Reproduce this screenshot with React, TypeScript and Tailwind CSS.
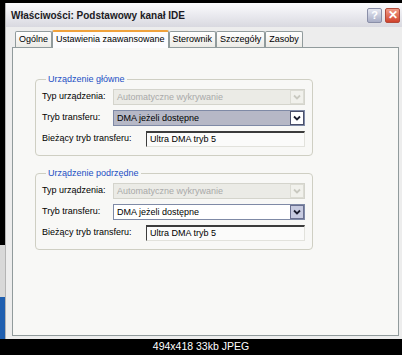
import React from 'react';

const font = { fontFamily: '"Liberation Sans", Arial, sans-serif' };

function Chevron({ color }: { color: string }) {
    return (
        <svg width="8" height="6" viewBox="0 0 8 6">
            <path d="M1 1.5 L4 4.5 L7 1.5" fill="none" stroke={color} strokeWidth="1.8" />
        </svg>
    );
}

function Combo({ value, kind }: { value: string; kind: 'disabled' | 'focused' | 'normal' }) {
    const box =
        kind === 'disabled'
            ? 'bg-[#ebebe6] border-[#d4d4cc] text-[#a9a9a9]'
            : kind === 'focused'
              ? 'bg-[#b6b8c6] border-[#7f8aa6] text-black'
              : 'bg-white border-[#7f8aa6] text-black';
    const btn =
        kind === 'disabled'
            ? 'bg-[#f1f1ec] border-[#dcdcd4]'
            : kind === 'focused'
              ? 'bg-white border-[#4a4f6a]'
              : 'bg-[#c7cbe0] border-[#6a7090]';
    return (
        <div className={`flex items-center h-[16px] w-[192px] border ${box}`}>
            <span className="flex-1 pl-[3px] text-[9px] leading-none truncate">{value}</span>
            <div className={`w-[14px] h-[14px] border flex items-center justify-center ${btn}`}>
                <Chevron color={kind === 'disabled' ? '#c9c9c0' : '#1b1d2e'} />
            </div>
        </div>
    );
}

function Group({ title, focused }: { title: string; focused: boolean }) {
    return (
        <fieldset className="w-[278px] border border-[#cfcfc3] rounded-[4px] pl-[6px] pr-[7px] pb-[8px]">
            <legend className="ml-[4px] px-[2px] text-[9px] text-[#1d4fc4] leading-[10px]">{title}</legend>
            <div className="flex flex-col gap-[5px] pt-[5px] text-[9px] text-black">
                <div className="flex items-center justify-between">
                    <span>Typ urządzenia:</span>
                    <Combo value="Automatyczne wykrywanie" kind="disabled" />
                </div>
                <div className="flex items-center justify-between">
                    <span>Tryb transferu:</span>
                    <Combo value="DMA jeżeli dostępne" kind={focused ? 'focused' : 'normal'} />
                </div>
                <div className="flex items-center justify-between">
                    <span>Bieżący tryb transferu:</span>
                    <div className="w-[159px] h-[16px] flex items-center pl-[3px] bg-[#fbfbfa] border-t-2 border-l border-t-[#3c3c3c] border-l-[#3c3c3c] border-r border-b border-r-[#e2e2dc] border-b-[#e2e2dc]">
                        Ultra DMA tryb 5
                    </div>
                </div>
            </div>
        </fieldset>
    );
}

const tabs = ['Ogólne', 'Ustawienia zaawansowane', 'Sterownik', 'Szczegóły', 'Zasoby'];

export default function App() {
    return (
        <div className="w-[402px] h-[355px] bg-black flex flex-col overflow-hidden" style={font}>
            <div className="flex h-[343px]">
                {/* strip of the desktop behind the window */}
                <div className="w-[5px] flex flex-col">
                    <div className="h-[245px] bg-black" />
                    <div className="h-[52px] bg-[#d8d8d8]" />
                    <div className="flex-1 bg-[#1f5fb0]" />
                </div>

                {/* Window */}
                <div className="flex-1 mt-[3px] flex flex-col bg-[#ededed] border-l border-[#b4b4b4]">
                    {/* Title bar */}
                    <div className="h-[24px] flex items-center pl-[5px] pr-[2px] bg-gradient-to-b from-[#fbfbfd] via-[#eaeaef] to-[#d9d9e0]">
                        <span className="flex-1 text-[10px] font-bold text-[#1b1b24]">
                            Właściwości: Podstawowy kanał IDE
                        </span>
                        <div className="w-[15px] h-[15px] mr-[3px] rounded-[2px] border border-[#8a8fa8] bg-gradient-to-b from-[#e6e8f2] to-[#a9aec6] flex items-center justify-center text-[11px] font-bold text-white leading-none">
                            ?
                        </div>
                        <div className="w-[15px] h-[15px] rounded-[2px] border border-[#b24a3a] bg-gradient-to-b from-[#f09a86] to-[#d0402a] flex items-center justify-center text-[12px] font-bold text-white leading-none">
                            ✕
                        </div>
                    </div>

                    {/* Body */}
                    <div className="flex-1 flex flex-col pl-[6px] pr-[3px] pt-[3px] pb-[3px]">
                        <div className="flex items-end pl-[3px] h-[17px] text-[9px]">
                            {tabs.map((t, i) =>
                                i === 1 ? (
                                    <div
                                        key={t}
                                        className="h-[18px] -mb-px px-[3px] flex items-center bg-[#fcfcfe] border border-b-0 border-[#919b9c] border-t-2 border-t-[#f0a23c] rounded-t-[2px] relative z-10 text-black"
                                    >
                                        {t}
                                    </div>
                                ) : (
                                    <div
                                        key={t}
                                        className="h-[16px] px-[3px] flex items-center bg-gradient-to-b from-white to-[#ecebe6] border border-b-0 border-[#919b9c] rounded-t-[2px] text-black"
                                    >
                                        {t}
                                    </div>
                                )
                            )}
                        </div>
                        <div className="flex-1 bg-[#f8f8f6] border border-[#919b9c] pt-[26px] pl-[22px] flex flex-col gap-[12px]">
                            <Group title="Urządzenie główne" focused />
                            <Group title="Urządzenie podrzędne" focused={false} />
                        </div>
                    </div>
                </div>
            </div>

            <div className="flex-1 flex items-center justify-center text-[10.5px] text-white">
                494x418 33kb JPEG
            </div>
        </div>
    );
}
